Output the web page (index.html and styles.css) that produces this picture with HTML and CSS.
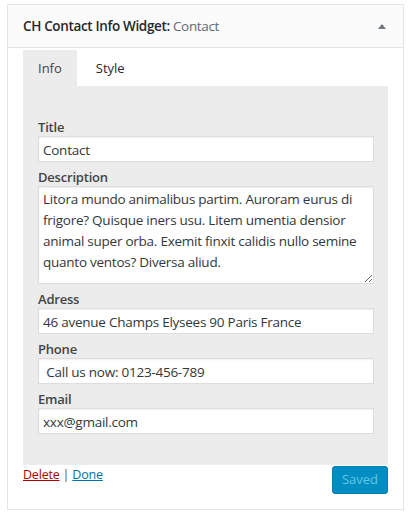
FILE: index.html
```html
<!DOCTYPE html>
<html lang="en">
<head>
<meta charset="utf-8">
<title>CH Contact Info Widget</title>
<link rel="stylesheet" href="styles.css">
</head>
<body>
<div class="widget">
  <div class="widget-top">
    <h3 class="widget-title">CH Contact Info Widget: <span class="in-title">Contact</span></h3>
    <span class="toggle"></span>
  </div>
  <div class="widget-inside">
    <ul class="tabs">
      <li class="tab active">Info</li>
      <li class="tab">Style</li>
    </ul>
    <div class="panel">
      <label class="field-label">Title</label>
      <input class="field" type="text" value="Contact">
      <label class="field-label">Description</label>
      <textarea class="field area">Litora mundo animalibus partim. Auroram eurus di frigore? Quisque iners usu. Litem umentia densior animal super orba. Exemit finxit calidis nullo semine quanto ventos? Diversa aliud.</textarea>
      <label class="field-label">Adress</label>
      <input class="field" type="text" value="46 avenue Champs Elysees 90 Paris France">
      <label class="field-label">Phone</label>
      <input class="field" type="text" value=" Call us now: 0123-456-789">
      <label class="field-label">Email</label>
      <input class="field last" type="text" value="xxx@gmail.com">
    </div>
    <div class="widget-control">
      <div class="links"><a class="delete" href="#">Delete</a> | <a class="done" href="#">Done</a></div>
      <button class="saved" type="button" disabled>Saved</button>
    </div>
  </div>
</div>
</body>
</html>
```
FILE: styles.css
```css
html, body {
  margin: 0;
  padding: 0;
  background: #fff;
}
body {
  font-family: "Open Sans", "Noto Sans", sans-serif;
  font-size: 13px;
  color: #444;
}
.widget {
  margin: 4px 5px 0 7px;
  width: 397px;
  box-sizing: border-box;
  border: 1px solid #e5e5e5;
  background: #fff;
}
.widget-top {
  height: 43px;
  box-sizing: border-box;
  border-bottom: 1px solid #e5e5e5;
  background: #fbfbfb;
  display: flex;
  align-items: center;
  justify-content: space-between;
  padding: 0 17px 0 15px;
}
.widget-title {
  margin: 0;
  font-size: 13.5px;
  font-weight: 600;
  color: #23282d;
  letter-spacing: -0.35px;
}
.in-title {
  font-weight: 400;
  color: #606a73;
}
.toggle {
  width: 0;
  height: 0;
  border-left: 4px solid transparent;
  border-right: 4px solid transparent;
  border-bottom: 5px solid #72777c;
}
.widget-inside {
  padding: 2px 15px 15px;
}
.tabs {
  list-style: none;
  margin: 0;
  padding: 0;
  display: flex;
}
.tab {
  height: 36px;
  line-height: 36px;
  padding: 0 15px;
  font-size: 13px;
  color: #23282d;
}
.tab.active {
  background: #ececec;
  color: #444;
}
.tab:nth-child(2) {
  padding: 0 19px;
}
.panel {
  background: #ececec;
  padding: 32px 14px 31px 15px;
  display: flex;
  flex-direction: column;
}
.field-label {
  display: block;
  line-height: 18px;
  font-weight: 600;
  color: #444;
  letter-spacing: -0.2px;
}
.field {
  display: block;
  box-sizing: border-box;
  width: 100%;
  height: 26px;
  margin: 0 0 6px;
  padding: 2px 4px 1px;
  border: 1px solid #ddd;
  box-shadow: inset 0 1px 2px rgba(0,0,0,0.07);
  background: #fff;
  font-family: "Open Sans", "Noto Sans", sans-serif;
  font-size: 13.5px;
  color: #32373c;
  letter-spacing: -0.25px;
  outline: none;
}
.field.last {
  margin-bottom: 0;
}
.area {
  height: 98px;
  line-height: 21px;
  padding: 2px 4px;
  resize: vertical;
  overflow: hidden;
}
.widget-control {
  display: flex;
  justify-content: space-between;
  align-items: flex-start;
  padding-top: 1px;
}
.links {
  line-height: 18px;
  font-size: 12.5px;
  letter-spacing: -0.2px;
  color: #555;
}
.delete {
  color: #a00;
}
.done {
  color: #0073aa;
}
.saved {
  width: 56px;
  height: 28px;
  border: 1px solid #007cb2;
  border-radius: 3px;
  background: #008ec2;
  color: #66c6e4;
  font-family: "Open Sans", "Noto Sans", sans-serif;
  font-size: 13px;
  padding: 0 0 2px;
}
```
